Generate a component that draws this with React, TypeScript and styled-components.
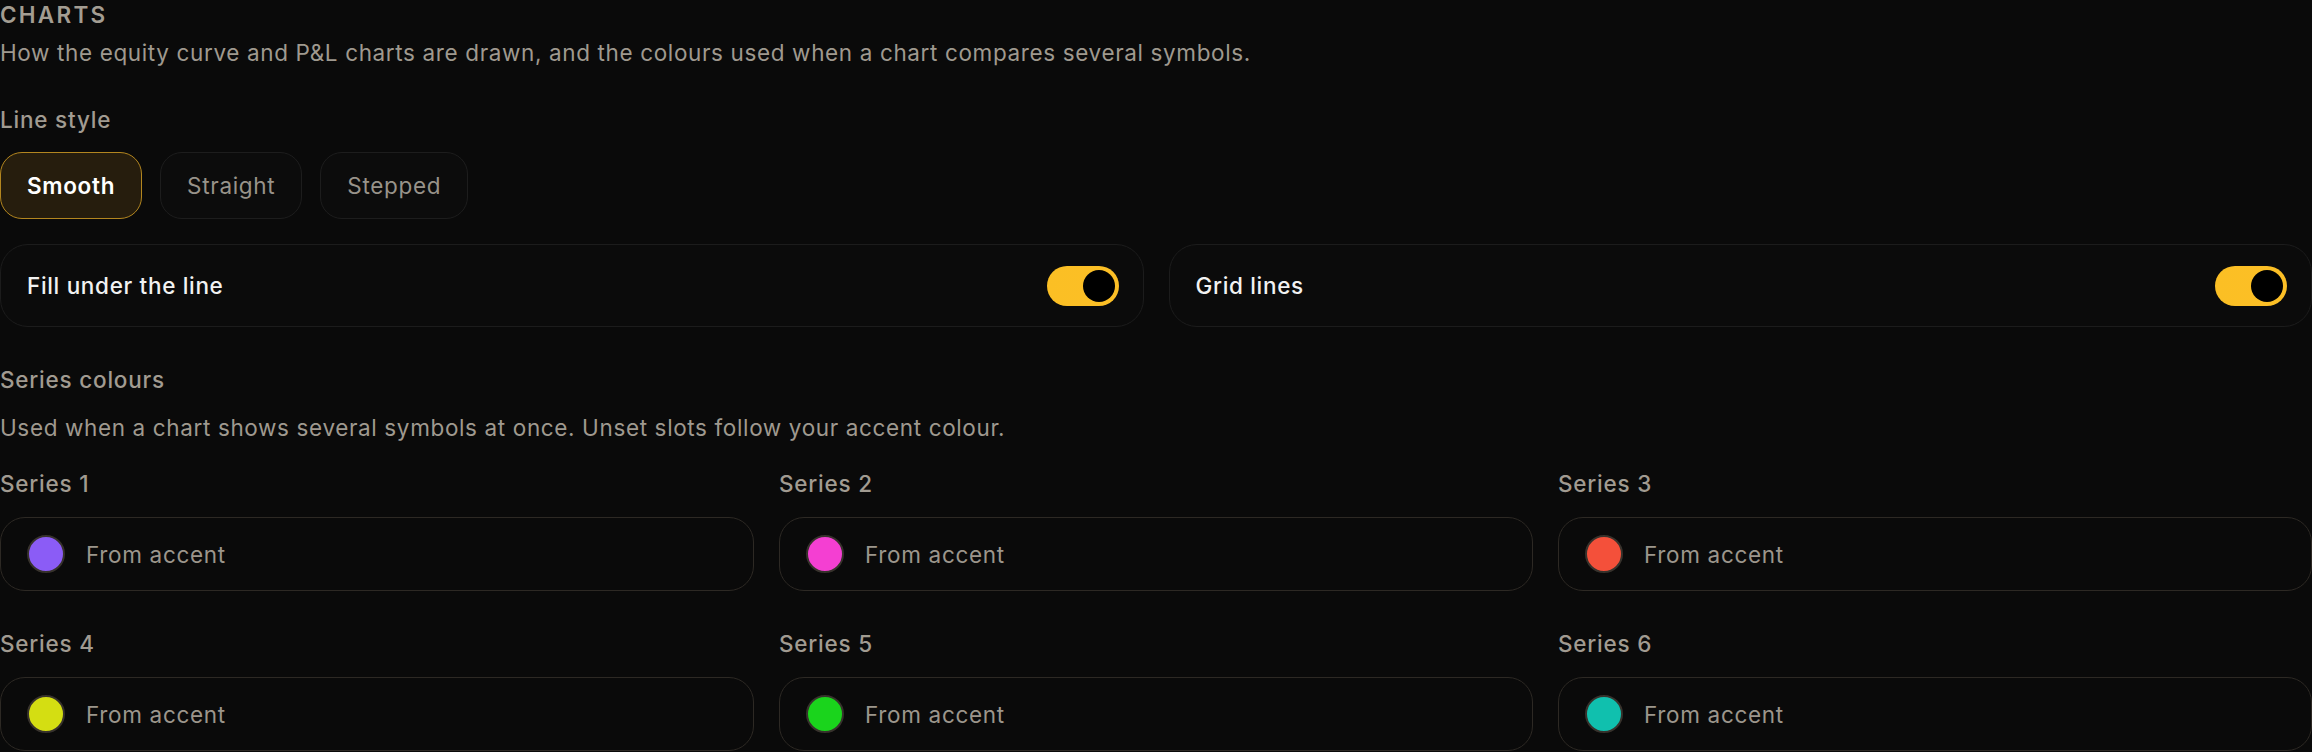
import React, { useState } from 'react'
import styled, { createGlobalStyle } from 'styled-components'

const GlobalStyle = createGlobalStyle`
  html, body {
    margin: 0;
    padding: 0;
    background: #0a0a0a;
  }
  body {
    font-family: Inter, "Noto Sans", "Liberation Sans", sans-serif;
    color: #9f998f;
    -webkit-font-smoothing: antialiased;
  }
  * {
    box-sizing: border-box;
  }
`

const Section = styled.section`
  width: 2312px;
  display: flex;
  flex-direction: column;
`

const Title = styled.h2`
  margin: 0;
  font-size: 22.5px;
  line-height: 30px;
  font-weight: 600;
  letter-spacing: 0.1em;
  text-transform: uppercase;
  color: #a39d92;
`

const Description = styled.p<{ $top?: number }>`
  margin: ${(p) => p.$top ?? 0}px 0 0;
  font-size: 22.5px;
  line-height: 30px;
  letter-spacing: 0.028em;
  color: #9f998f;
`

const FieldLabel = styled.div<{ $top: number }>`
  margin-top: ${(p) => p.$top}px;
  font-size: 22.5px;
  line-height: 30px;
  font-weight: 450;
  letter-spacing: 0.035em;
  color: #a19b91;
`

const Segmented = styled.div`
  display: flex;
  gap: 18px;
  margin-top: 17px;
`

const SegmentButton = styled.button<{ $active?: boolean }>`
  height: 67px;
  padding: 0 26px;
  border-radius: 22px;
  font-family: inherit;
  font-size: 22.5px;
  letter-spacing: 0.03em;
  font-weight: ${(p) => (p.$active ? 600 : 400)};
  color: ${(p) => (p.$active ? '#ffffff' : '#98938a')};
  background: ${(p) => (p.$active ? '#261d0d' : '#0c0c0c')};
  border: 1.5px solid ${(p) => (p.$active ? '#b3861f' : '#1d1d1d')};
  cursor: pointer;
`

const ToggleGrid = styled.div`
  display: grid;
  grid-template-columns: 1fr 1fr;
  gap: 25px;
  margin-top: 25px;
`

const ToggleCard = styled.div`
  height: 83px;
  display: flex;
  align-items: center;
  justify-content: space-between;
  padding: 0 24px 0 26px;
  border: 1.5px solid #1c1c1c;
  border-radius: 28px;
  background: #0b0b0b;
`

const ToggleText = styled.span`
  font-size: 22.5px;
  font-weight: 500;
  letter-spacing: 0.03em;
  color: #f2f2f2;
`

const Switch = styled.button<{ $on: boolean }>`
  width: 72px;
  height: 40px;
  padding: 4px;
  border: none;
  border-radius: 20px;
  display: flex;
  justify-content: ${(p) => (p.$on ? 'flex-end' : 'flex-start')};
  background: ${(p) =>
    p.$on ? 'linear-gradient(90deg, #fbbf24, #fcbf26)' : '#2a2a2a'};
  cursor: pointer;
`

const Knob = styled.span`
  width: 32px;
  height: 32px;
  border-radius: 50%;
  background: #000;
`

const SeriesGrid = styled.div`
  display: grid;
  grid-template-columns: repeat(3, 1fr);
  column-gap: 25px;
`

const SeriesField = styled.div<{ $top: number }>`
  display: flex;
  flex-direction: column;
  margin-top: ${(p) => p.$top}px;
`

const ColourInput = styled.div`
  margin-top: 18px;
  height: 74px;
  display: flex;
  align-items: center;
  gap: 21px;
  padding: 0 26px;
  border: 1.5px solid #2d2924;
  border-radius: 25px;
  background: #0a0a0a;
`

const Swatch = styled.span<{ $colour: string }>`
  width: 38px;
  height: 38px;
  border-radius: 50%;
  background: ${(p) => p.$colour};
  border: 2.5px solid #37322c;
  flex-shrink: 0;
`

const InputText = styled.span`
  font-size: 22.5px;
  letter-spacing: 0.03em;
  color: #9c968c;
`

const series = [
  { name: 'Series 1', colour: '#8b5cf6' },
  { name: 'Series 2', colour: '#f43fd2' },
  { name: 'Series 3', colour: '#f4503a' },
  { name: 'Series 4', colour: '#d4de12' },
  { name: 'Series 5', colour: '#1ad41c' },
  { name: 'Series 6', colour: '#10c0ae' },
]

const lineStyles = ['Smooth', 'Straight', 'Stepped']

export default function App() {
  const [style, setStyle] = useState('Smooth')
  const [fill, setFill] = useState(true)
  const [grid, setGrid] = useState(true)

  return (
    <>
      <GlobalStyle />
      <Section>
        <Title>Charts</Title>
        <Description $top={8}>
          How the equity curve and P&amp;L charts are drawn, and the colours used when a chart
          compares several symbols.
        </Description>

        <FieldLabel $top={37}>Line style</FieldLabel>
        <Segmented>
          {lineStyles.map((s) => (
            <SegmentButton key={s} $active={style === s} onClick={() => setStyle(s)}>
              {s}
            </SegmentButton>
          ))}
        </Segmented>

        <ToggleGrid>
          <ToggleCard>
            <ToggleText>Fill under the line</ToggleText>
            <Switch $on={fill} onClick={() => setFill(!fill)}>
              <Knob />
            </Switch>
          </ToggleCard>
          <ToggleCard>
            <ToggleText>Grid lines</ToggleText>
            <Switch $on={grid} onClick={() => setGrid(!grid)}>
              <Knob />
            </Switch>
          </ToggleCard>
        </ToggleGrid>

        <FieldLabel $top={38}>Series colours</FieldLabel>
        <Description $top={18}>
          Used when a chart shows several symbols at once. Unset slots follow your accent colour.
        </Description>

        <SeriesGrid>
          {series.map((s, i) => (
            <SeriesField key={s.name} $top={i < 3 ? 26 : 38}>
              <FieldLabel $top={0}>{s.name}</FieldLabel>
              <ColourInput>
                <Swatch $colour={s.colour} />
                <InputText>From accent</InputText>
              </ColourInput>
            </SeriesField>
          ))}
        </SeriesGrid>
      </Section>
    </>
  )
}
